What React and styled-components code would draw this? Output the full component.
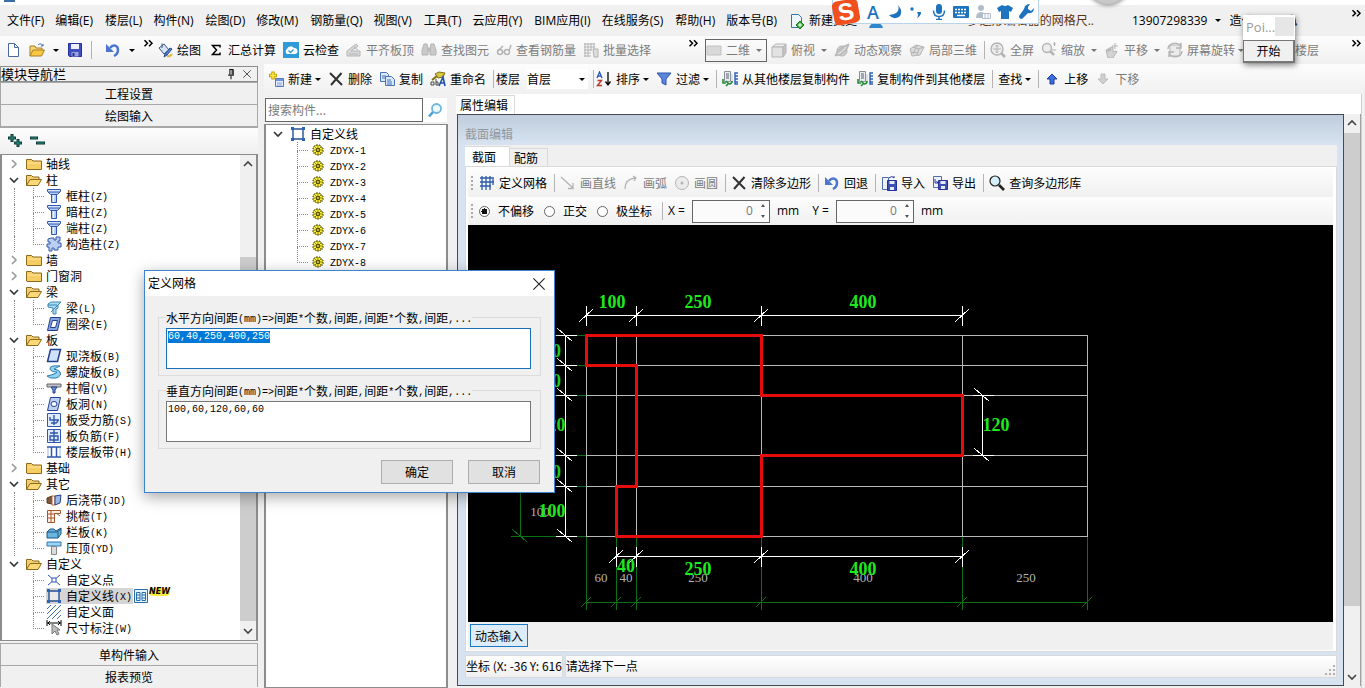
import React, { useEffect, useRef } from "react";
import styled, { createGlobalStyle } from "styled-components";

const ui = '"Open Sans", "Noto Sans CJK SC", sans-serif';
const cjk = '"Noto Sans CJK SC", "Noto Sans", sans-serif';

const GlobalStyle = createGlobalStyle`
  * { box-sizing: border-box; }
  body { margin: 0; background: #f0f0f0; font: 12px/16px ${ui}; color: #000; }
  button, input, select, textarea { font: inherit; color: inherit; margin: 0; padding: 0; }
  button { background: none; border: 0; text-align: left; }
  fieldset { margin: 0; min-width: 0; }
`;

/* ---------- icons ---------- */

const folderBody = "M.5 13V3.5h5l1.500 1.500h8.500V13.500H1z";
const g = "#b4b4b4";
const art = {
  page: <path d="M3.500 1.500h6l4 4v9h-10zM9.500 1.500v4h4" fill="#fff" stroke="#4a6a9c" />,
  open: (
    <>
      <path d="M1 14V4h5l1 2h6v2" fill="#f7d774" stroke="#a87f22" />
      <path d="M1 14l3-6h11.500l-3 6z" fill="#f9c646" stroke="#a87f22" />
      <path d="M9 3c2-2 4-1 5 1m0-2v2h-2" fill="none" stroke="#3f6fb0" />
    </>
  ),
  save: (
    <>
      <path d="M1.500 1.500h13v13h-12l-1-1z" fill="#3f4fc0" stroke="#26309a" />
      <path d="M4 2h8v5H4z" fill="#eef0fa" />
      <path d="M4.500 10h7v4.500h-7z" fill="#9aa3d8" />
      <path d="M5.500 11h2v3h-2z" fill="#26309a" />
    </>
  ),
  undo: (
    <>
      <path d="M5 6c3-4 8-3 8 2 0 3-2 5-4 6" fill="none" stroke="#4a76cf" strokeWidth="2.500" />
      <path d="M1 2v8h8z" fill="#4a76cf" />
    </>
  ),
  bucket: (
    <>
      <path d="M2 6l5-4 5 6-5 4z" fill="#d7e3f4" stroke="#35558f" />
      <path d="M5 6V1.500" stroke="#35558f" />
      <path d="M15 7l-5 6-3 2 1-3 5-6z" fill="#5b84cf" stroke="#24478a" />
      <path d="M10 14q3 1 5-2" stroke="#dcb93a" strokeWidth="2" fill="none" />
    </>
  ),
  sigma: <path d="M12 5.500V3.500H4.500L8.500 8l-4 4.500H12v-2" fill="none" stroke="#000" strokeWidth="1.500" />,
  cloud: (
    <>
      <path d="M0 0h16v16H0z" fill="#2f9ad8" />
      <path d="M4 12a3 3 0 0 1 0-5 4 4 0 0 1 7-1 3 3 0 0 1 1 6z" fill="#fff" />
      <path d="M5.500 8.500l2 2 3-3" stroke="#2f9ad8" fill="none" strokeWidth="1.300" />
    </>
  ),
  align: (
    <>
      <path d="M1 9l9-7 2 2-7 5h9v5H1z" fill="#d8d8d8" stroke={g} />
      <path d="M3 12h9M8 5l4 3" stroke={g} />
    </>
  ),
  find: (
    <g fill="#c9c9c9" stroke={g}>
      <path d="M3 2h3l1 5v6H1V8zM10 2h3l2 6v5H9V7z" />
      <path d="M7 6h2v3H7z" />
    </g>
  ),
  glasses: (
    <g fill="none" stroke={g} strokeWidth="1.500">
      <circle cx="4" cy="10" r="2.500" />
      <circle cx="11" cy="10" r="2.500" />
      <path d="M6.500 10h2M2 9l5-5M13 9l2-6" />
    </g>
  ),
  batch: (
    <>
      <path d="M1 2h11M1 5h11M1 8h8M1 11h7M1 14h7M2 1v14M5 1v14M8 1v8M11 1v6" stroke={g} fill="none" />
      <path d="M10 7h5v8h-4z" fill="#dcdcdc" stroke={g} />
    </>
  ),
  rect: <path d="M1 4h14v9H1z" fill="#d9d9d9" stroke="#c2c2c2" />,
  cube: (
    <g stroke={g}>
      <path d="M1 5l4-3h10l-3 3z" fill="#efefef" />
      <path d="M1 5h11v10H1z" fill="#e2e2e2" />
      <path d="M12 5l3-3v9l-3 4z" fill="#c4c4c4" />
    </g>
  ),
  orbit: (
    <g stroke={g}>
      <ellipse cx="8" cy="9" rx="5" ry="5" fill="#cfcfcf" />
      <path d="M1 14Q3 6 15 2 13 12 1 14z" fill="#c2c2c2" />
      <path d="M4 12q5-2 8-7" stroke="#efefef" fill="none" />
    </g>
  ),
  local3d: (
    <g stroke={g} fill="#dcdcdc">
      <path d="M1 7l6-4 8 2-4 8-8 1z" />
      <path d="M4 5l6 2-2 6M10 7l4-2M2 10l7 1M8 3l-4 9" fill="none" />
    </g>
  ),
  full: (
    <g fill="none" stroke={g}>
      <circle cx="7" cy="7" r="6" fill="#ededed" strokeWidth="1.400" />
      <path d="M7 3v8M3 7h8M5.500 4.500L7 3l1.500 1.500M5.500 9.500L7 11l1.500-1.500" />
      <path d="M11 11l4 4" strokeWidth="2.500" />
    </g>
  ),
  zoomer: (
    <g fill="none" stroke={g}>
      <circle cx="6" cy="6" r="4.500" fill="#ededed" strokeWidth="1.400" />
      <path d="M9 9l4 4" strokeWidth="2.500" />
      <path d="M12 2h3M13.500 0v4M11 8h4" />
    </g>
  ),
  pan: (
    <g stroke={g}>
      <path d="M2 8l2-1v3l1-4h1v3l1-4h2v5l3-1 1 1-3 4-1 2H4z" fill="#d3d3d3" />
      <path d="M11 1v6M8 4h6" />
    </g>
  ),
  rotate: (
    <g fill="none" stroke={g}>
      <path d="M3 3h10v11H3z" fill="#ebebeb" />
      <path d="M1 7a7 6 0 0 1 12-4l1-2v5h-5M15 9a7 6 0 0 1-12 4l-1 2v-5h5" strokeWidth="1.400" />
    </g>
  ),
  create: (
    <>
      <path d="M5 .5v8M1 4.500h8" stroke="#c9a400" strokeWidth="3.500" />
      <path d="M5 1.500v6M2 4.500h6" stroke="#ffe94d" strokeWidth="1.500" />
      <path d="M7.500 7.500h8v8h-8z" fill="#e4ecfb" stroke="#5777b5" />
      <path d="M8 8h7v2H8z" fill="#6f94da" />
      <path d="M9 12h5M9 14h5" stroke="#8aa5d6" />
    </>
  ),
  cross: <path d="M2 2l12 12M13.500 2L3 14" stroke="#333" strokeWidth="2" fill="none" />,
  copy: (
    <g fill="#dbe7fb" stroke="#4871b8">
      <path d="M1.500 1.500h6l2 2v7h-8zM3 5h4M3 7h4" />
      <path d="M6.500 5.500h6l3 3v6h-9zM8 9h4M8 11h5M8 13h5" />
    </g>
  ),
  rename: (
    <>
      <path d="M5 3l4-2 6 1-2 4-5 1z" fill="#d9c640" stroke="#7d7118" />
      <path d="M7 5L2 9" stroke="#7d7118" strokeWidth="2" />
      <path d="M1 14v-3h3v3H1M6 8v6h2v-3H6" fill="none" stroke="#444" />
      <path d="M9 15l4-9 2 9M10 12h4" fill="none" stroke="#1f4fae" strokeWidth="1.600" />
    </>
  ),
  sort: (
    <>
      <path d="M1 7l2.500-6L6 7M2 5h3" stroke="#2e58b8" fill="none" strokeWidth="1.300" />
      <path d="M1.500 9.500h4l-4 5h4.500" stroke="#b53a2a" fill="none" strokeWidth="1.400" />
      <path d="M12 1v12M9.500 10.500L12 14l2.500-3.500" stroke="#000" strokeWidth="1.300" fill="none" />
    </>
  ),
  filter: <path d="M1 2h14l-5 6v6l-4-2V8z" fill="#5b86dc" stroke="#2c55a8" />,
  floors: (
    <>
      <path d="M2.500.5h6v10h-6z" fill="#e8eaee" stroke="#8a919c" />
      <path d="M4 3h3M4 5h3M4 7h3" stroke="#5c6470" />
      <path d="M16 2h-3v11h3M13 5h3M13 8h3M13 11h3" fill="none" stroke="#2c62b4" strokeWidth="1.400" />
      <path d="M10 3v9" stroke="#c3c9d3" />
      <path d="M1 8v4h3M4 10l2.500 2.500L4 15M10 10q0 3-3 3" stroke="#1f8c36" strokeWidth="1.600" fill="none" />
    </>
  ),
  up: <path d="M8 3l5 5h-3v5H6V8H3z" fill="#3c6ee0" stroke="#1b3fa0" />,
  down: <path d="M8 13L3 8h3V3h4v5h3z" fill="#cfcfcf" stroke="#bdbdbd" />,
  grid: (
    <path d="M1 3h14M1 7h14M1 11h11M3 1v14M7 1v14M11 1v14M14 4v6" stroke="#2c5aa8" strokeWidth="1.300" fill="none" />
  ),
  line: <path d="M1 2l12 11M13 8v5.500H8" stroke={g} strokeWidth="1.300" fill="none" />,
  arc: <path d="M2 14Q2 4 12 3M10 1l3 2-2 3" stroke={g} strokeWidth="1.300" fill="none" />,
  circle: (
    <>
      <circle cx="8" cy="8" r="6.500" fill="#ececec" stroke={g} />
      <circle cx="8" cy="8" r="1.500" fill={g} />
    </>
  ),
  import: (
    <>
      <path d="M1.500 2.500h6v12h-6z" fill="#eef3fb" stroke="#4f6fa8" />
      <path d="M6.500 5.500h9v10h-9z" fill="#3f4fb0" stroke="#26309a" />
      <path d="M8.500 6h5v3h-5zM9 12h4v3H9z" fill="#e6e9f8" />
      <path d="M8 3q3-3 5 0V1" fill="none" stroke="#26309a" />
    </>
  ),
  export: (
    <>
      <path d="M1.500 1.500h8v11h-8z" fill="#eef3fb" stroke="#4f6fa8" />
      <path d="M6.500 5.500h9v9h-9z" fill="#3f4fb0" stroke="#26309a" />
      <path d="M8.500 6h5v3h-5zM9 11h4v3H9z" fill="#e6e9f8" />
      <path d="M3 4v4h3L4.500 6" fill="none" stroke="#26309a" />
    </>
  ),
  search: (
    <>
      <circle cx="6" cy="6" r="5" fill="#d5effa" stroke="#222" strokeWidth="1.200" />
      <path d="M10 10l5 5" stroke="#222" strokeWidth="2.600" />
    </>
  ),
  searchBlue: (
    <>
      <circle cx="9.500" cy="6.500" r="4.500" fill="#eef8fd" stroke="#6db5dc" strokeWidth="1.800" />
      <path d="M6 10l-4 4.500" stroke="#4f9fd0" strokeWidth="2.600" />
    </>
  ),
  folder: (
    <>
      <path d={folderBody} fill="#f6cd61" stroke="#8c6a1c" />
      <path d="M1 7h14" stroke="#fbe6a6" />
    </>
  ),
  folderOpen: (
    <>
      <path d="M.5 13.500V3.500h5l1.500 1.500h6v3" fill="#f3cf74" stroke="#8c6a1c" />
      <path d="M.5 13.500l3.500-6h11.500l-3.500 6z" fill="#fbd775" stroke="#8c6a1c" />
    </>
  ),
  column: (
    <g stroke="#2f57ad" fill="#b9cdf3">
      <path d="M1.500 1.500h13v2l-3 3h-7l-3-3z" />
      <path d="M5.500 6.500h5v8h-5z" />
      <path d="M7.500 7v7M2 3h12" stroke="#fff" />
      <path d="M2 4h12" />
    </g>
  ),
  puzzle: (
    <path d="M5 2h3v2h2V1h4v4h-2v2h3v4h-3v3H8v-2H6v3H3v-4H1V8h3V6H2V3z" fill="#bccff0" stroke="#2f57ad" />
  ),
  beam: (
    <g stroke="#3a86b8" fill="#a9dcf2">
      <path d="M2 4l3-2h10l-3 3v3l-2 1v5H7V8L2 7z" />
      <path d="M2 5h9M5 12l8-8" fill="none" />
    </g>
  ),
  ring: (
    <g stroke="#23408c">
      <path d="M4.500 1.500h10l-3 13h-10z" fill="#86a4e0" />
      <path d="M6.500 4.500h5l-2 7h-5z" fill="#fff" />
    </g>
  ),
  slab: <path d="M4.500 1.500h10l-3 12h-10z" fill="#cfe0fb" stroke="#23408c" strokeWidth="1.500" />,
  spiral: <path d="M14 2Q3 1 4 5q1 3 7 3-1 2-10 4 3 3 9 2 6-2 4-6-1-2-6-3 2-1 6-3z" fill="#8fd2f2" stroke="#2c7cae" />,
  cap: (
    <>
      <path d="M1 4h14v3H1z" fill="#c0c4ca" stroke="#666" />
      <path d="M5 7h6l-2 3v3H7v-3z" fill="#6d90dd" stroke="#23408c" />
    </>
  ),
  hole: (
    <g stroke="#23408c">
      <path d="M4.500 1.500h10l-3 13h-10z" fill="#bcd0f6" />
      <ellipse cx="8" cy="8" rx="3" ry="2.500" fill="#fff" />
    </g>
  ),
  rebarA: (
    <g stroke="#2f57ad" fill="none">
      <path d="M1.500 1.500h13v13h-13z" fill="#e2ebfc" />
      <path d="M4 5v3h9M8 3v10M5 11h5q2-1 2-3" strokeWidth="1.400" />
    </g>
  ),
  rebarB: (
    <g stroke="#2f57ad" fill="none">
      <path d="M1.500 1.500h13v13h-13z" fill="#e2ebfc" />
      <path d="M8 2v12M4 5h8M4 8h8v4H4z" strokeWidth="1.400" />
    </g>
  ),
  strip: (
    <g stroke="#2f57ad" fill="none">
      <path d="M1 3h14M1 13h14M5.500 3v10M10.500 3v10" strokeWidth="1.500" />
      <path d="M2 4v8M14 4v8" stroke="#9db7ea" />
    </g>
  ),
  pour: (
    <>
      <path d="M1 6l5-2v8l-5-1z" fill="#7d5a3d" stroke="#553a24" />
      <path d="M6 4h3v9H6z" fill="#fff" stroke="#c66a2e" />
      <path d="M9 4l6-1-1 8-5 2z" fill="#9ab8e6" stroke="#23408c" />
    </>
  ),
  eaves: (
    <g fill="#fff1e4" stroke="#a4552c">
      <path d="M1.500 2.500h13v3h-6v9h-7z" />
      <path d="M1.500 6h7M1.500 10h7M5 3v11M10 5l4 3" fill="none" />
    </g>
  ),
  rail: (
    <g stroke="#1c5480">
      <path d="M1 8l3-3h4l2 2 5-3v6l-3 4H1z" fill="#68b5e0" />
      <path d="M1 8h10l4-3M12 8v5" fill="none" />
    </g>
  ),
  top: (
    <>
      <path d="M1 2h14v4H1z" fill="#9bd4f5" stroke="#2f79ae" />
      <path d="M5.500 6.500h5v8h-5z" fill="#dcdcdc" stroke="#888" />
    </>
  ),
  point: (
    <>
      <path d="M2 3l12 10M14 3L2 13" stroke="#2f57ad" fill="none" />
      <path d="M6 6h4v4H6z" fill="#fff" stroke="#2f57ad" />
    </>
  ),
  poly: (
    <>
      <path d="M3 3h10v10H3z" fill="#fff" fillOpacity=".5" stroke="#24508f" strokeWidth="1.400" />
      <path d="M1 1h3v3H1zM12 1h3v3h-3zM1 12h3v3H1zM12 12h3v3h-3z" fill="#2a62b8" />
    </>
  ),
  hatch: <path d="M1 5l4-4M1 10l9-9M1 15L15 1M6 15l9-9M11 15l4-4" stroke="#3f6cbc" fill="none" />,
  measure: (
    <>
      <path d="M1 0v6M15 0v6M1 3h14M4 1L2 3l2 2M12 1l2 2-2 2" stroke="#000" fill="none" />
      <path d="M6 4v10l3-3 2 4 2-1-2-4h3z" fill="#bdbdbd" stroke="#777" />
    </>
  ),
  gear: (
    <>
      <path d="M6 3h4v2h2v1h1v4h-1v2h-2v1H6v-1H4v-2H3V6h1V4h2z" fill="#f5ee4a" stroke="#595100" strokeDasharray="2 1" />
      <path d="M8 3v10M3 8h10M5 5l6 6M11 5l-6 6" stroke="#8d8300" />
      <path d="M6.500 6.500h3v3h-3z" fill="#f5ee4a" stroke="#595100" />
      <path d="M7.500 7.500h1v1h-1z" fill="#222" />
    </>
  ),
  sheet: (
    <>
      <path d="M1.500 1.500h13v13h-13z" fill="#e3f4fd" stroke="#2b6ea8" />
      <path d="M3.500 4.500h3.500v8H3.500zM9 4.500h3.500v8H9zM3.500 7h3.500M9 7h3.500M3.500 10h3.500M9 10h3.500" fill="none" stroke="#2b6ea8" />
    </>
  ),
  plus: (
    <g stroke="#0b3b36" strokeWidth="3">
      <path d="M5 1v8M1 5h8M11 6v8M7 10h8" />
      <path d="M5 2v6M2 5h6M11 7v6M8 10h6" stroke="#2c8d80" strokeWidth="1" />
    </g>
  ),
  minus: (
    <g stroke="#0b3b36" strokeWidth="3">
      <path d="M1 5h8M7 10h9" />
      <path d="M2 5h6M8 10h7" stroke="#2c8d80" strokeWidth="1" />
    </g>
  ),
  newDoc: (
    <>
      <path d="M2.500 1.500h7l3 3v10h-10z" fill="#eef6fd" stroke="#2d75b5" />
      <path d="M11 8l4 4-4 4-4-4z" fill="#35a835" stroke="#1c7a1c" />
      <path d="M11 10v4M9 12h4" stroke="#fff" />
    </>
  ),
  headset: (
    <g fill="#2f86cf">
      <circle cx="8" cy="6" r="5" />
      <path d="M1 15q1-5 7-5t7 5z" />
    </g>
  ),
  bell: <path d="M3 12q2-2 2-6 0-4 3-4t3 4q0 4 2 6zM7 13h2v2H7z" fill="#3170c4" stroke="#1d4f97" />,
  moon: <path d="M11 1q3 9-9 10 4 5 10 2 5-5-1-12z" fill="#1e73be" />,
  comma: (
    <>
      <circle cx="3" cy="5" r="1.700" fill="#1e73be" />
      <path d="M8 8h4q0 4-4 6 2-3 0-6z" fill="#1e73be" />
    </>
  ),
  mic: (
    <>
      <rect x="5" y="0" width="6" height="10" rx="3" fill="#1e73be" />
      <path d="M2.500 6.500q0 6 5.500 6t5.500-6M8 12v3M5 15.500h6" fill="none" stroke="#1e73be" strokeWidth="1.500" />
    </>
  ),
  keyboard: (
    <>
      <rect x="0" y="2" width="16" height="12" rx="1" fill="#1e73be" />
      <path d="M2 5.500h12M2 8.500h12" stroke="#fff" strokeWidth="1.500" strokeDasharray="2 1" />
      <path d="M4 11.500h8" stroke="#fff" strokeWidth="1.500" />
    </>
  ),
  person: (
    <>
      <circle cx="6" cy="4" r="3" fill="#b3bccb" />
      <path d="M1 14q0-6 5-6t5 6z" fill="#b3bccb" />
      <path d="M7.500 9.500h8v5h-8zM10 10v4M13 10v4" fill="#fff" stroke="#b3bccb" />
    </>
  ),
  shirt: <path d="M5 1q3 2 6 0l5 3-2 4-2-1v8H4V7L2 8 0 4z" fill="#1e73be" />,
  wrench: <path d="M15 4l-3 3-3-2V3l2-3q-5 0-6 5l-5 7q0 3 3 3l6-6q6 1 6-5z" fill="#1e73be" />,
  pin: <path d="M6 2h5v7M6.500 2v7M9.500 2v7M4 9.500h8M8 10v5" fill="none" stroke="#000" strokeWidth="1.300" />,
  close: <path d="M3 3l10 10M13 3L3 13" fill="none" stroke="#222" />,
  more: <path d="M2 3l4 4-4 4M8 3l4 4-4 4" fill="none" stroke="#000" strokeWidth="2" />,
};

const Svg = styled.svg`
  display: block;
  flex: none;
`;

const Icon = ({ name, size = 16 }) => (
  <Svg width={size} height={size} viewBox="0 0 16 16" aria-hidden="true">
    {art[name]}
  </Svg>
);

const Caret = styled.span`
  flex: none;
  border: 3px solid transparent;
  border-top-color: ${(p) => (p.$dim ? "#777" : "#000")};
  border-bottom: 0;
  margin-left: ${(p) => p.$gap || 0}px;
`;

const Chevron = ({ dir, color = "#444" }) => {
  const d = { up: "M1 7l4-4 4 4", down: "M1 3l4 4 4-4", right: "M3 1l4 4-4 4" }[dir];
  return (
    <Svg width="10" height="10" viewBox="0 0 10 10" aria-hidden="true">
      <path d={d} fill="none" stroke={color} strokeWidth="1.600" />
    </Svg>
  );
};

/* ASCII runs are set in a narrow fixed pitch beside full-width characters. */
const Mono = styled.span`
  font: 10px/12px "Liberation Mono", monospace;
  vertical-align: 1px;
`;
const mixed = (text) =>
  text.split(/([\x20-\x7e]+)/).map((t, i) => (i % 2 ? <Mono key={i}>{t}</Mono> : t));

/* ---------- frame ---------- */

const Page = styled.div`
  position: relative;
  display: flex;
  flex-direction: column;
  min-height: 100vh;
  overflow: hidden;
`;

const TitleEdge = styled.div`
  height: 5px;
  background: #fff;
  padding-left: 4px;
  &::before {
    content: "";
    display: block;
    width: 11px;
    height: 2px;
    background: #3d6ea5;
  }
`;

const Bar = styled.div`
  display: flex;
  align-items: center;
  flex: none;
  overflow: hidden;
  white-space: nowrap;
  height: ${(p) => p.$h}px;
  padding-left: ${(p) => p.$left || 0}px;
  background: ${(p) => (p.$flat ? "#f0f0f0" : "linear-gradient(#fdfdfd, #f0f0f0)")};
`;

const MenuItem = styled.button`
  white-space: nowrap;
  flex: none;
  color: ${(p) => (p.$brown ? "#5b3210" : "#000")};
  display: flex;
  align-items: center;
  gap: 4px;
`;

const MenuBar = styled(Bar)`
  gap: 11px;
  > ${MenuItem}:nth-child(even) { margin-right: 1px; }
`;

const Tip = styled.div`
  display: flex;
  align-items: center;
  justify-content: space-between;
  flex: 1;
  min-width: 0;
  padding-right: 27px;
`;

const Account = styled.div`
  display: flex;
  align-items: center;
  gap: 8px;
  width: 233px;
  height: 100%;
  flex: none;
`;

const MoreButton = styled.button`
  margin: ${(p) => p.$top || 0}px ${(p) => p.$end}px 0 auto;
  align-self: flex-start;
`;

const More = (props) => (
  <MoreButton aria-label="更多" {...props}>
    <Icon name="more" size={12} />
  </MoreButton>
);

const Tool = styled.button`
  display: flex;
  align-items: center;
  gap: 4px;
  flex: none;
  height: 23px;
  margin-right: 7px;
  font-family: ${cjk};
  color: ${(p) => (p.$dim ? "#7c7c7c" : "#000")};
  ${(p) => p.$boxed && "border: 1px solid #666; width: 62px; margin-right: 4px;"}
`;

const ToolSep = styled.span`
  flex: none;
  width: 1px;
  height: 18px;
  background: #b4b4b4;
  margin-right: ${(p) => (p.$tight ? 2 : 5)}px;
`;

const Quick = styled.div`
  display: flex;
  align-items: center;
  gap: 8px;
  width: 152px;
  height: 100%;
  flex: none;
`;

const Strip = styled.div`
  display: flex;
  align-items: center;
  height: 100%;
  flex: none;
  width: 548px;
`;

const T = ({ icon, dim, caret, boxed, children }) => (
  <Tool $dim={dim} $boxed={boxed}>
    {icon && <Icon name={icon} />}
    <span>{children}</span>
    {caret && <Caret $dim={dim} $gap={caret === "wide" ? 2 : -1} />}
  </Tool>
);

const Body = styled.div`
  display: flex;
  flex: 1;
`;

/* ---------- navigation ---------- */

const Nav = styled.nav`
  display: flex;
  flex-direction: column;
  width: 258px;
  flex: none;
  padding: 2px 0 1px;
  font-family: ${cjk};
`;

const NavHead = styled.div`
  display: flex;
  align-items: center;
  height: 16px;
  border: 1px solid #8c8c8c;
  line-height: 14px;
  h2 { font: inherit; font-size: 13px; margin: 0 auto 0 0; }
  button { margin-right: 4px; }
`;

const NavButton = styled.button`
  height: 22px;
  flex: none;
  text-align: center;
  border: 1px solid #a8a8a8;
  border-width: 1px 1px 0 1px;
  background: #f0f0f0;
`;

const NavTools = styled.div`
  display: flex;
  align-items: center;
  gap: 6px;
  height: 28px;
  flex: none;
  padding-left: 7px;
  border-top: 2px solid #a8a8a8;
  background: linear-gradient(#fdfdfd, #f0f0f0);
`;

const Pane = styled.div`
  display: flex;
  flex: 1;
  border: 2px solid #8c8c8c;
  border-width: 1px 2px 1px 2px;
  background: #fff;
  margin-bottom: ${(p) => p.$gap || 0}px;
`;

const List = styled.ul`
  flex: 1;
  list-style: none;
  margin: 0;
  padding: 1px 0 4px;
  ul { list-style: none; margin: 0; padding: 0; }
`;

const Row = styled.div`
  display: flex;
  align-items: center;
  height: 16px;
  white-space: nowrap;
`;

const Expand = styled.button`
  display: flex;
  justify-content: center;
  align-items: center;
  width: 24px;
  height: 16px;
`;

const Entry = styled.span`
  display: flex;
  align-items: center;
  background: ${(p) => (p.$on ? "#d5d5d5" : "none")};
`;

const Text = styled.span`
  padding: 0 1px 0 4px;
  line-height: 16px;
`;

const Rail = styled.span`
  width: 13px;
  height: 16px;
  margin-right: 18px;
  border-right: 1px ${(p) => (p.$on ? "dotted #888" : "solid transparent")};
`;

const Branch = styled.span`
  width: 13px;
  height: 16px;
  &::before, &::after {
    content: "";
    display: block;
    height: 8px;
    border-left: 1px dotted #888;
  }
  &::before { border-bottom: 1px dotted #888; margin-right: 2px; }
  &::after { border-left-color: ${(p) => (p.$last ? "transparent" : "#888")}; }
`;

const NewTag = styled.sup`
  font: italic bold 8px/8px "DejaVu Sans", sans-serif;
  background: #ffe93b;
  border-radius: 4px;
  align-self: flex-start;
`;

function Group({ label, icon, open, last, items = [] }) {
  return (
    <li>
      <Row>
        <Expand aria-label={label}>
          <Chevron dir={open ? "down" : "right"} color={open ? "#333" : "#999"} />
        </Expand>
        <Icon name={icon || (open ? "folderOpen" : "folder")} />
        <Text>{label}</Text>
      </Row>
      {items.length > 0 && (
        <ul>
          {items.map(([name, text, on], i) => (
            <li key={text}>
              <Row>
                <Rail $on={!last} />
                <Branch $last={i === items.length - 1} />
                <Entry $on={on}>
                  <Icon name={name} />
                  <Text>{mixed(text)}</Text>
                </Entry>
                {on && <Icon name="sheet" />}
                {on && <NewTag>NEW</NewTag>}
              </Row>
            </li>
          ))}
        </ul>
      )}
    </li>
  );
}

const groups = [
  { label: "轴线" },
  {
    label: "柱",
    items: [["column", "框柱(Z)"], ["column", "暗柱(Z)"], ["column", "端柱(Z)"], ["puzzle", "构造柱(Z)"]],
  },
  { label: "墙" },
  { label: "门窗洞" },
  { label: "梁", items: [["beam", "梁(L)"], ["ring", "圈梁(E)"]] },
  {
    label: "板",
    items: [
      ["slab", "现浇板(B)"],
      ["spiral", "螺旋板(B)"],
      ["cap", "柱帽(V)"],
      ["hole", "板洞(N)"],
      ["rebarA", "板受力筋(S)"],
      ["rebarB", "板负筋(F)"],
      ["strip", "楼层板带(H)"],
    ],
  },
  { label: "基础" },
  {
    label: "其它",
    items: [["pour", "后浇带(JD)"], ["eaves", "挑檐(T)"], ["rail", "栏板(K)"], ["top", "压顶(YD)"]],
  },
  {
    label: "自定义",
    items: [["point", "自定义点"], ["poly", "自定义线(X)", true], ["hatch", "自定义面"], ["measure", "尺寸标注(W)"]],
  },
];

const ScrollTrack = styled.div`
  display: flex;
  flex-direction: column;
  flex: none;
  width: ${(p) => p.$w}px;
  background: #f0f0f0;
  border-right: ${(p) => (p.$edge ? "1px solid #a0a0a0" : "0")};
  button { display: flex; justify-content: center; align-items: center; height: 18px; }
`;

const Thumb = styled.div`
  flex: ${(p) => p.$size};
  background: #cdcdcd;
`;
const Gap = styled.div`
  flex: ${(p) => p.$size};
`;

const ScrollBar = ({ w, before, size, after, edge }) => (
  <ScrollTrack $w={w} $edge={edge}>
    <button aria-label="向上滚动"><Chevron dir="up" /></button>
    <Gap $size={before} />
    <Thumb $size={size} />
    <Gap $size={after} />
    <button aria-label="向下滚动"><Chevron dir="down" /></button>
  </ScrollTrack>
);

/* ---------- workspace ---------- */

const Work = styled.main`
  display: flex;
  flex-direction: column;
  flex: 1;
  min-width: 0;
  margin-left: 6px;
`;

const FloorPick = styled.label`
  display: flex;
  align-items: center;
  flex: none;
  margin-right: 5px;
  font-family: ${cjk};
  span { margin-right: 7px; }
  select { width: 61px; height: 20px; border: 0; background: #fff; appearance: none; }
  i { margin-left: -9px; margin-right: 3px; }
`;

const Columns = styled.div`
  display: flex;
  flex: 1;
`;

const Components = styled.section`
  display: flex;
  flex-direction: column;
  width: 184px;
  flex: none;
  padding-top: 3px;
  font-family: ${cjk};
`;

const SearchRow = styled.form`
  display: flex;
  height: 27px;
  flex: none;
  padding: 1px 1px 2px;
  input { flex: 1; min-width: 0; border: 1px solid #666; padding-left: 2px; background: #fff; }
  input::placeholder { color: #7a7a7a; opacity: 1; }
  button { width: 24px; background: #fff; display: flex; align-items: center; justify-content: center; }
`;

const Property = styled.section`
  display: flex;
  flex-direction: column;
  flex: 1;
  min-width: 0;
  margin-left: 8px;
  border-right: 1px solid #d0d0d0;
  margin-right: 3px;
  background: #fff;
`;

const TabRow = styled.div`
  display: flex;
  height: 20px;
  flex: none;
`;

const Tab = styled.button`
  font-family: ${cjk};
  padding: 0 ${(p) => p.$end}px 0 ${(p) => p.$start}px;
  height: ${(p) => p.$h}px;
  align-self: flex-end;
  border: 1px solid #d9d9d9;
  border-width: 1px 1px 0 0;
  background: ${(p) => (p.$on ? "#fff" : "#f0f0f0")};
`;

const PropertyBody = styled.div`
  display: flex;
  flex: 1;
  padding-bottom: 2px;
  background: #f0f0f0;
`;

const Window = styled.div`
  display: flex;
  flex-direction: column;
  flex: 1;
  min-width: 0;
  margin-left: 1px;
  border: 1px solid #454b55;
  background: linear-gradient(#bfcddc, #d7e3f0 30px, #d7e3f0);
  padding: 0 6px 7px 7px;
`;

const WindowTitle = styled.h2`
  margin: 0;
  height: 30px;
  flex: none;
  font: 12px/37px ${cjk};
  color: #8f979f;
`;

const SectionTabs = styled(TabRow)`
  height: 21px;
  background: #f0f0f0;
`;

const SectionPage = styled.div`
  display: flex;
  flex-direction: column;
  flex: 1;
  background: #fff;
  border: 1px solid #d9d9d9;
  padding: 1px 3px 1px 2px;
`;

const Grip = styled.span`
  flex: none;
  height: 14px;
  border-left: 2px dotted #aaa;
  margin-right: 6px;
`;

const Radio = styled.label`
  display: flex;
  align-items: center;
  gap: 8px;
  margin-right: 10px;
  flex: none;
  font-family: ${cjk};
  input {
    appearance: none;
    width: 11px;
    height: 11px;
    border: 1px solid #666;
    border-radius: 50%;
    background: #fff;
  }
  input:checked { background: radial-gradient(#111 3px, #fff 3px); }
`;

const Spin = styled.label`
  display: flex;
  align-items: center;
  flex: none;
  gap: 7px;
  margin-right: 13px;
`;

const SpinBox = styled.span`
  display: flex;
  align-items: center;
  width: 78px;
  height: 23px;
  border: 1px solid #666;
  background: #fbfbfb;
  input { width: 60px; border: 0; background: none; text-align: right; color: #777; outline: 0; }
`;

const Steps = styled.span`
  display: flex;
  flex-direction: column;
  gap: 8px;
  margin-left: 8px;
  &::before, &::after { content: ""; border: 2px solid transparent; }
  &::before { border-bottom: 3px solid #555; border-top: 0; }
  &::after { border-top: 3px solid #555; border-bottom: 0; }
`;

const Canvas = styled.svg`
  display: block;
  flex: 1;
  width: 100%;
  min-height: 397px;
  background: #000;
`;

const CommandRow = styled.div`
  height: 28px;
  flex: none;
  padding: 2px;
  background: #f0f0f0;
  button {
    height: 23px;
    padding: 0 4px;
    border: 1px solid #1a78c2;
    background: #dcecf8;
    font-family: ${cjk};
  }
`;

const Status = styled.footer`
  display: flex;
  height: 23px;
  flex: none;
  margin-top: 3px;
  font-family: ${cjk};
  line-height: 20px;
  span { border: 1px solid #dadada; background: linear-gradient(#fff, #f0f0f0); white-space: nowrap; }
  span:first-child { min-width: 97px; margin-right: 2px; }
  span:last-child { flex: 1; display: flex; }
  svg { margin: auto 0 1px auto; }
`;

const xs = [586, 616, 636, 761, 962, 1087];
const ys = [335, 365, 395, 455, 486, 536];

const slash = (x, y) => `M${x - 7} ${y + 6}L${x + 7} ${y - 7}`;
const back = (x, y) => `M${x - 8} ${y - 7}L${x + 7} ${y + 6}`;
const tick = (x, y) => `M${x - 5} ${y + 5}L${x + 5} ${y - 5}`;
const rowDim = (pts, y) =>
  `M${pts[0]} ${y}H${pts[pts.length - 1]}` + pts.map((x) => `M${x} ${y - 10}V${y + 10}${slash(x, y)}`).join("");
const colDim = (pts, x) =>
  `M${x} ${pts[0]}V${pts[pts.length - 1]}` + pts.map((y) => `M${x - 10} ${y}H${x + 11}${back(x, y)}`).join("");

const boldMarks = [
  [612, 308, "100"], [698, 308, "250"], [863, 308, "400"],
  [552, 357, "60"], [552, 387, "60"], [552, 431, "120"], [552, 478, "60"], [552, 517, "100"],
  [996, 431, "120"],
  [626, 572, "40"], [698, 575, "250"], [863, 575, "400"],
];
const thinMarks = [
  [540, 516, "100"], [601, 582, "60"], [626, 582, "40"], [698, 582, "250"], [863, 582, "400"], [1026, 582, "250"],
];

function Drawing() {
  return (
    <Canvas role="img" aria-label="截面图">
      <g transform="translate(-468 -225)" fill="none" shapeRendering="crispEdges">
        <g stroke="#0b7018">
          {xs.map((x) => (
            <path key={x} d={`M${x}.5 537V610${tick(x, 602)}`} />
          ))}
          <path d="M586 602.5H1087M520.500 335V537" />
          {ys.map((y) => (
            <path key={y} d={`M511 ${y}.5H586`} />
          ))}
          <path d={back(520, 536)} />
        </g>
        <g stroke="#b8b8b8">
          {xs.map((x) => (
            <path key={x} d={`M${x}.5 335V537`} />
          ))}
          {ys.map((y) => (
            <path key={y} d={`M586 ${y}.5H1088`} />
          ))}
        </g>
        <g stroke="#fff" transform="translate(.5 .5)">
          <path d={rowDim([586, 636, 761, 962], 315)} />
          <path d={rowDim([616, 636, 761, 962], 556)} />
          <path d={colDim(ys, 565)} />
          <path d={colDim([395, 455], 982)} />
        </g>
        <path
          d="M586 335H761V395H962V455H761V536H616V486H636V365H586Z"
          transform="translate(.5 .5)"
          stroke="#e60c0c"
          strokeWidth="3"
        />
      </g>
      <g transform="translate(-468 -225)" textAnchor="middle" fontFamily="Liberation Serif, serif">
        <g fill="#b4b4b4" fontSize="13">
          {thinMarks.map(([x, y, t]) => (
            <text key={`${x}-${y}`} x={x} y={y}>{t}</text>
          ))}
        </g>
        <g fill="#1fe81f" fontSize="18" fontWeight="bold">
          {boldMarks.map(([x, y, t]) => (
            <text key={`${x}-${y}`} x={x} y={y}>{t}</text>
          ))}
        </g>
      </g>
    </Canvas>
  );
}

/* ---------- floating windows ---------- */

const Dialog = styled.div`
  position: absolute;
  left: 144px;
  top: 270px;
  width: 411px;
  border: 1px solid #3a84d0;
  background: #f0f0f0;
  box-shadow: 0 4px 14px rgba(0, 0, 0, 0.35);
  font-family: ${cjk};
`;

const DialogTitle = styled.div`
  display: flex;
  align-items: center;
  justify-content: space-between;
  height: 25px;
  background: #fff;
  padding: 0 6px 0 3px;
  h2 { font: inherit; line-height: 14px; margin: 0 0 2px; }
`;

const Field = styled.fieldset`
  margin: 13px 13px 0;
  padding: 2px 9px 6px 7px;
  border: 1px solid #dcdcdc;
  height: 67px;
  & + & { margin-top: 6px; }
  legend { padding: 0; height: 17px; line-height: 17px; white-space: nowrap; }
  textarea {
    display: block;
    width: 100%;
    height: 41px;
    resize: none;
    border: 1px solid ${(p) => (p.$focus ? "#1a6fb8" : "#777")};
    outline: 0;
    padding: 2px 1px;
    background: #fff;
    font: 10px/12px "Liberation Mono", monospace;
  }
  textarea::selection { background: #0078d7; color: #fff; }
`;

const Actions = styled.div`
  display: flex;
  justify-content: flex-end;
  gap: 15px;
  padding: 11px 14px 8px;
  button { width: 72px; height: 24px; text-align: center; border: 1px solid #adadad; background: #e1e1e1; }
`;

function GridDialog() {
  const first = useRef(null);
  useEffect(() => {
    first.current.focus();
    first.current.select();
  }, []);
  return (
    <Dialog role="dialog" aria-label="定义网格">
      <DialogTitle>
        <h2>定义网格</h2>
        <button aria-label="关闭"><Icon name="close" size={18} /></button>
      </DialogTitle>
      <Field $focus>
        <legend><label htmlFor="gx">{mixed("水平方向间距(mm)=>间距*个数,间距,间距*个数,间距,...")}</label></legend>
        <textarea id="gx" ref={first} defaultValue="60,40,250,400,250" spellCheck={false} />
      </Field>
      <Field>
        <legend><label htmlFor="gy">{mixed("垂直方向间距(mm)=>间距*个数,间距,间距*个数,间距,...")}</label></legend>
        <textarea id="gy" defaultValue="100,60,120,60,60" spellCheck={false} />
      </Field>
      <Actions>
        <button>确定</button>
        <button>取消</button>
      </Actions>
    </Dialog>
  );
}

const Ime = styled.div`
  position: absolute;
  left: 832px;
  top: 0;
  display: flex;
  align-items: center;
  gap: 6px;
  height: 24px;
  width: 207px;
  background: #fff;
  border: 1px solid #b9d3ea;
  border-top: 0;
  b { width: 16px; text-align: center; font: 600 18px/20px ${ui}; color: #1e73be; }
`;

const ImeLogo = styled.span`
  flex: none;
  width: 26px;
  height: 24px;
  border-radius: 5px;
  background: #f0501e;
  transform: rotate(-10deg);
  color: #fff;
  text-align: center;
  font: bold 24px/24px "Liberation Sans", sans-serif;
`;

const Mini = styled.div`
  position: absolute;
  left: 1243px;
  top: 15px;
  width: 52px;
  background: #fff;
  box-shadow: 1px 2px 6px rgba(0, 0, 0, 0.5);
  header { display: flex; height: 25px; padding: 2px 1px 4px 3px; color: #9a9a9a; line-height: 20px; font-size: 13px; }
  header i { width: 19px; background: #e6e6e6; margin-left: auto; }
  button {
    display: block;
    width: 100%;
    height: 23px;
    text-align: center;
    font-family: ${cjk};
    background: #f0f0f0;
    border: 2px solid #777;
    border-width: 1px 2px 2px 1px;
  }
`;

const Bubble = styled.div`
  position: absolute;
  left: 1087px;
  top: -38px;
  width: 42px;
  height: 42px;
  border-radius: 50%;
  background: #c8c8c8;
  box-shadow: 0 1px 4px rgba(0, 0, 0, 0.5);
`;

const menus = [
  "文件(F)", "编辑(E)", "楼层(L)", "构件(N)", "绘图(D)", "修改(M)", "钢筋量(Q)", "视图(V)", "工具(T)",
  "云应用(Y)", "BIM应用(I)", "在线服务(S)", "帮助(H)", "版本号(B)",
];

const Spinner = ({ label }) => (
  <Spin>
    {label} =
    <SpinBox>
      <input defaultValue="0" />
      <Steps />
    </SpinBox>
    mm
  </Spin>
);

export default function App() {
  return (
    <>
      <GlobalStyle />
      <Page>
        <TitleEdge />
        <MenuBar $h={31} $left={7} $flat>
          {menus.map((m) => (
            <MenuItem key={m}>{m}</MenuItem>
          ))}
          <MenuItem>
            <Icon name="newDoc" />
            新建变更
          </MenuItem>
          <Tip>
            <Icon name="headset" />
            <MenuItem $brown>多边形编辑器的网格尺..</MenuItem>
          </Tip>
          <Account>
            <MenuItem>13907298339</MenuItem>
            <Caret />
            <MenuItem>造价豆:0</MenuItem>
            <Icon name="bell" />
            <More $top={3} $end={2} />
          </Account>
        </MenuBar>

        <Bar $h={28} $left={5}>
          <Quick>
            <Icon name="page" />
            <Icon name="open" />
            <Caret />
            <Icon name="save" />
            <ToolSep />
            <Icon name="undo" />
            <Caret />
            <More $top={2} $end={6} />
          </Quick>
          <Strip>
            <T icon="bucket">绘图</T>
            <T icon="sigma">汇总计算</T>
            <T icon="cloud">云检查</T>
            <T icon="align" dim>平齐板顶</T>
            <T icon="find" dim>查找图元</T>
            <T icon="glasses" dim>查看钢筋量</T>
            <T icon="batch" dim>批量选择</T>
            <More $top={2} $end={5} />
          </Strip>
          <T icon="rect" dim caret="wide" boxed>二维</T>
          <T icon="cube" dim caret="wide">俯视</T>
          <T icon="orbit" dim>动态观察</T>
          <T icon="local3d" dim>局部三维</T>
          <ToolSep />
          <T icon="full" dim>全屏</T>
          <T icon="zoomer" dim caret="wide">缩放</T>
          <T icon="pan" dim caret="wide">平移</T>
          <T icon="rotate" dim caret>屏幕旋转</T>
          <T icon="cube" dim>选择楼层</T>
          <More $top={2} $end={2} />
        </Bar>

        <Body>
          <Nav>
            <NavHead>
              <h2>模块导航栏</h2>
              <button aria-label="固定"><Icon name="pin" size={12} /></button>
              <button aria-label="关闭"><Icon name="close" size={12} /></button>
            </NavHead>
            <NavButton>工程设置</NavButton>
            <NavButton>绘图输入</NavButton>
            <NavTools>
              <button aria-label="展开"><Icon name="plus" /></button>
              <button aria-label="折叠"><Icon name="minus" /></button>
            </NavTools>
            <Pane $gap={2}>
              <List>
                {groups.map((x, i) => (
                  <Group key={x.label} {...x} open={!!x.items} last={i === groups.length - 1} />
                ))}
              </List>
              <ScrollBar w={16} before={84} size={364} after={1} />
            </Pane>
            <NavButton>单构件输入</NavButton>
            <NavButton>报表预览</NavButton>
          </Nav>

          <Work>
            <Bar $h={30} $left={4}>
              <T icon="create" caret>新建</T>
              <T icon="cross">删除</T>
              <T icon="copy">复制</T>
              <T icon="rename">重命名</T>
              <ToolSep $tight />
              <FloorPick>
                <span>楼层</span>
                <select defaultValue="首层">
                  <option>首层</option>
                </select>
                <Caret as="i" />
              </FloorPick>
              <ToolSep $tight />
              <T icon="sort" caret>排序</T>
              <T icon="filter" caret>过滤</T>
              <ToolSep />
              <T icon="floors">从其他楼层复制构件</T>
              <T icon="floors">复制构件到其他楼层</T>
              <ToolSep />
              <T caret>查找</T>
              <ToolSep />
              <T icon="up">上移</T>
              <T icon="down" dim>下移</T>
            </Bar>

            <Columns>
              <Components>
                <SearchRow>
                  <input placeholder="搜索构件..." aria-label="搜索构件" />
                  <button type="button" aria-label="搜索"><Icon name="searchBlue" /></button>
                </SearchRow>
                <Pane>
                  <List>
                    <Group
                      label="自定义线"
                      icon="poly"
                      open
                      last
                      items={[1, 2, 3, 4, 5, 6, 7, 8].map((n) => ["gear", `ZDYX-${n}`])}
                    />
                  </List>
                </Pane>
              </Components>

              <Property>
                <TabRow>
                  <Tab $on $h={19} $start={4} $end={6}>属性编辑</Tab>
                </TabRow>
                <PropertyBody>
                  <Window>
                    <WindowTitle>截面编辑</WindowTitle>
                    <SectionTabs>
                      <Tab $on $h={20} $start={7} $end={13}>截面</Tab>
                      <Tab $h={18} $start={4} $end={9}>配筋</Tab>
                    </SectionTabs>
                    <SectionPage>
                      <Bar $h={29} $left={3}>
                        <Grip />
                        <T icon="grid">定义网格</T>
                        <ToolSep />
                        <T icon="line" dim>画直线</T>
                        <T icon="arc" dim>画弧</T>
                        <T icon="circle" dim>画圆</T>
                        <ToolSep />
                        <T icon="cross">清除多边形</T>
                        <ToolSep />
                        <T icon="undo">回退</T>
                        <ToolSep />
                        <T icon="import">导入</T>
                        <T icon="export">导出</T>
                        <ToolSep />
                        <T icon="search">查询多边形库</T>
                      </Bar>
                      <Bar $h={28} $left={3}>
                        <Grip />
                        <Radio><input type="radio" name="offset" defaultChecked />不偏移</Radio>
                        <Radio><input type="radio" name="offset" />正交</Radio>
                        <Radio><input type="radio" name="offset" />极坐标</Radio>
                        <ToolSep />
                        <Spinner label="X" />
                        <Spinner label="Y" />
                      </Bar>
                      <Drawing />
                      <CommandRow>
                        <button>动态输入</button>
                      </CommandRow>
                    </SectionPage>
                    <Status>
                      <span>坐标 (X: -36 Y: 616</span>
                      <span>
                        请选择下一点
                        <Svg width="12" height="12" viewBox="0 0 12 12" aria-hidden="true">
                          <path d="M9 1h2v2H9zM9 5h2v2H9zM5 5h2v2H5zM9 9h2v2H9zM5 9h2v2H5zM1 9h2v2H1z" fill="#b0b0b0" />
                        </Svg>
                      </span>
                    </Status>
                  </Window>
                  <ScrollBar w={17} before={1} size={460} after={60} edge />
                </PropertyBody>
              </Property>
            </Columns>
          </Work>
        </Body>

        <GridDialog />
        <Bubble />
        <Ime>
          <ImeLogo>S</ImeLogo>
          <b>A</b>
          <Icon name="moon" />
          <Icon name="comma" />
          <Icon name="mic" />
          <Icon name="keyboard" />
          <Icon name="person" />
          <Icon name="shirt" />
          <Icon name="wrench" />
        </Ime>
        <Mini>
          <header>Poi...<i /></header>
          <button>开始</button>
        </Mini>
      </Page>
    </>
  );
}
